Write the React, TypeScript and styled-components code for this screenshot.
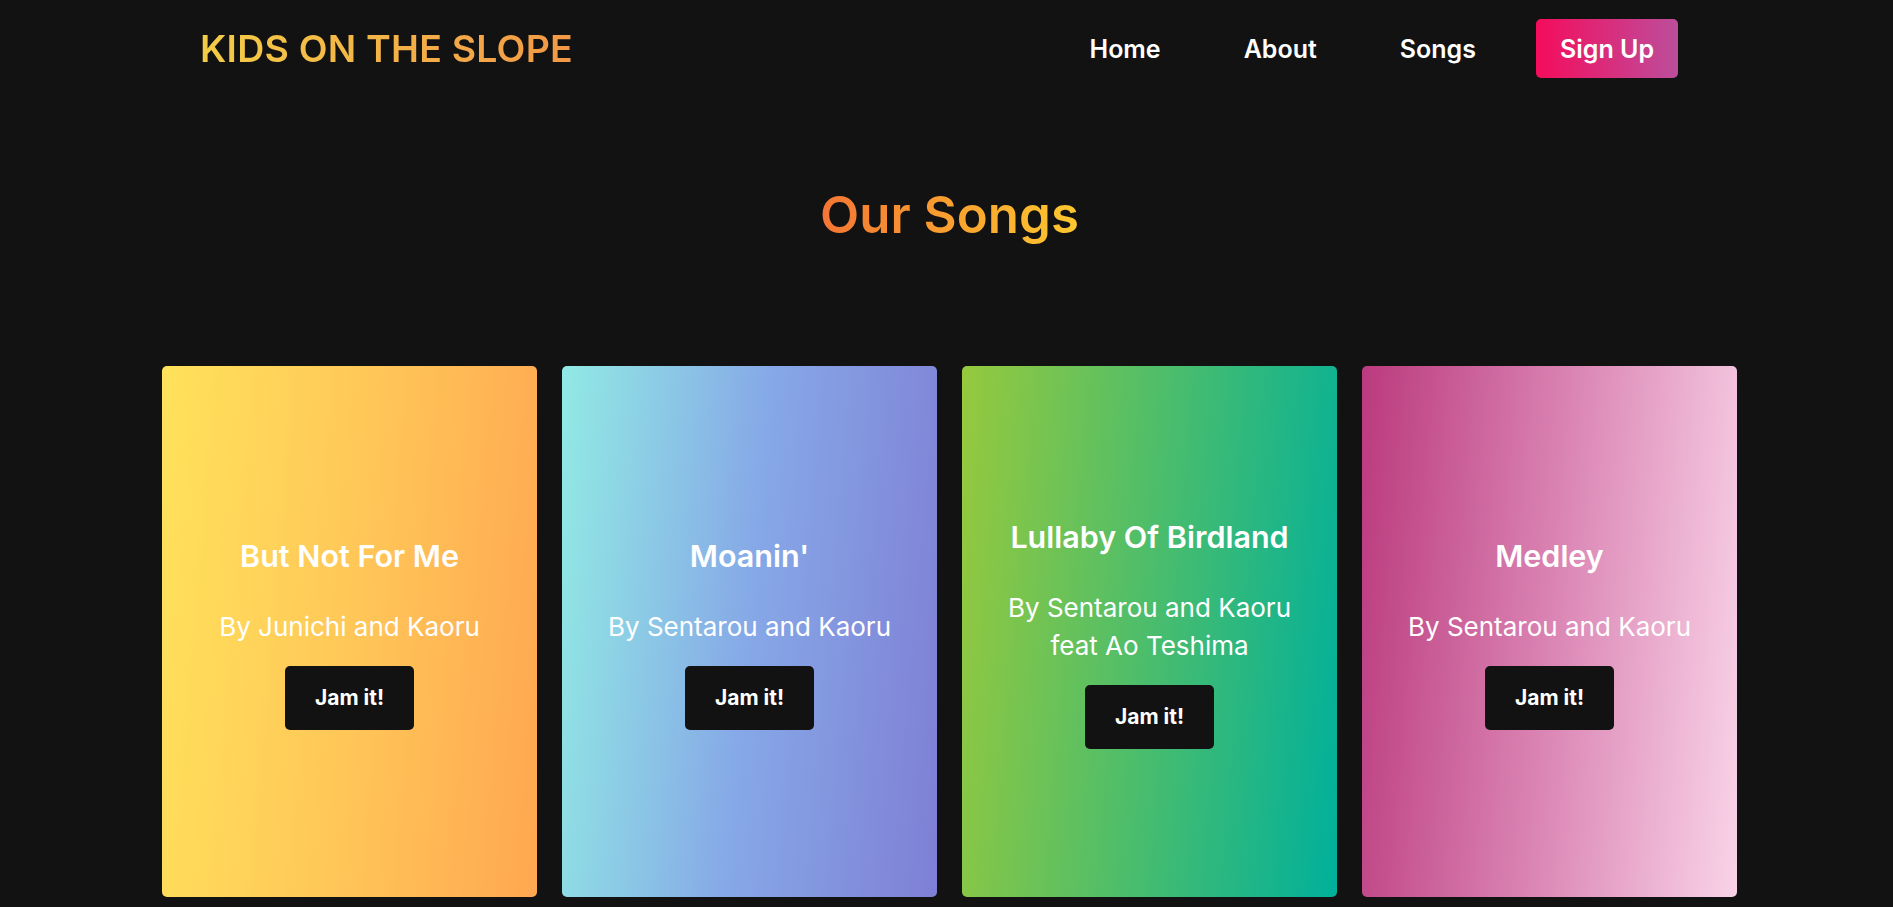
import React from "react";
import styled, { createGlobalStyle } from "styled-components";

const GlobalStyle = createGlobalStyle`
  * { box-sizing: border-box; }
  html, body {
    margin: 0;
    padding: 0;
    background: #121212;
    font-family: "Inter", "Noto Sans", sans-serif;
    color: #ffffff;
  }
`;

const Page = styled.div`
  min-height: 907px;
  background: #121212;
`;

const Header = styled.header`
  display: flex;
  align-items: center;
  justify-content: space-between;
  padding: 19px 215px 19px 200px;
`;

const Logo = styled.a`
  font-size: 37.5px;
  font-weight: 600;
  line-height: 59px;
  letter-spacing: 0.2px;
  background: linear-gradient(90deg, #f3cd47 0%, #f3ad47 60%, #f39847 100%);
  -webkit-background-clip: text;
  background-clip: text;
  color: transparent;
  text-decoration: none;
  white-space: nowrap;
`;

const Nav = styled.nav`
  display: flex;
  align-items: center;
  gap: 60px;
`;

const NavLinks = styled.ul`
  display: flex;
  align-items: center;
  gap: 83px;
  list-style: none;
  margin: 0;
  padding: 0;
`;

const NavLink = styled.a`
  font-size: 25px;
  font-weight: 600;
  color: #ffffff;
  text-decoration: none;
`;

const SignUp = styled.button`
  height: 59px;
  padding: 0 24px;
  border: none;
  border-radius: 5px;
  background: linear-gradient(90deg, #f50c5c 0%, #bc4e9c 100%);
  color: #ffffff;
  font-family: inherit;
  font-size: 25px;
  font-weight: 600;
  cursor: pointer;
`;

const Main = styled.main`
  padding: 0 0 0 6px;
  display: flex;
  flex-direction: column;
  align-items: center;
`;

const Heading = styled.h1`
  margin: 80px 0 114px;
  font-size: 51px;
  line-height: 75px;
  font-weight: 600;
  background: linear-gradient(90deg, #f47535 0%, #f9a42f 55%, #fdc830 100%);
  -webkit-background-clip: text;
  background-clip: text;
  color: transparent;
`;

const CardGrid = styled.section`
  display: grid;
  grid-template-columns: repeat(4, 375px);
  gap: 25px;
`;

const Card = styled.article<{ $from: string; $mid: string; $to: string }>`
  height: 531px;
  border-radius: 5px;
  background: linear-gradient(
    95deg,
    ${(p) => p.$from} 0%,
    ${(p) => p.$mid} 50%,
    ${(p) => p.$to} 100%
  );
  display: flex;
  flex-direction: column;
  align-items: center;
  justify-content: center;
  padding: 0 30px;
  text-align: center;
`;

const CardTitle = styled.h2`
  margin: 0;
  font-size: 30.5px;
  line-height: 45px;
  font-weight: 600;
  color: #ffffff;
`;

const CardArtist = styled.p`
  margin: 30px 0 21px;
  font-size: 26px;
  line-height: 37.8px;
  font-weight: 400;
  color: #ffffff;
`;

const JamButton = styled.button`
  padding: 17px 30px;
  border: none;
  border-radius: 5px;
  background: #121212;
  color: #ffffff;
  font-family: inherit;
  font-size: 21px;
  line-height: 30px;
  font-weight: 700;
  cursor: pointer;
`;

const songs = [
  {
    title: "But Not For Me",
    artist: "By Junichi and Kaoru",
    from: "#ffe25b",
    mid: "#ffc758",
    to: "#ffa751",
  },
  {
    title: "Moanin'",
    artist: "By Sentarou and Kaoru",
    from: "#91eae4",
    mid: "#86a8e7",
    to: "#7f7fd5",
  },
  {
    title: "Lullaby Of Birdland",
    artist: "By Sentarou and Kaoru feat Ao Teshima",
    from: "#96c93d",
    mid: "#4bbd6c",
    to: "#00b09b",
  },
  {
    title: "Medley",
    artist: "By Sentarou and Kaoru",
    from: "#bb3a7e",
    mid: "#da84b3",
    to: "#f9d3e8",
  },
];

export default function App() {
  return (
    <>
      <GlobalStyle />
      <Page>
        <Header>
          <Logo href="#">KIDS ON THE SLOPE</Logo>
          <Nav>
            <NavLinks>
              <li>
                <NavLink href="#">Home</NavLink>
              </li>
              <li>
                <NavLink href="#">About</NavLink>
              </li>
              <li>
                <NavLink href="#">Songs</NavLink>
              </li>
            </NavLinks>
            <SignUp>Sign Up</SignUp>
          </Nav>
        </Header>
        <Main>
          <Heading>Our Songs</Heading>
          <CardGrid>
            {songs.map((s) => (
              <Card key={s.title} $from={s.from} $mid={s.mid} $to={s.to}>
                <CardTitle>{s.title}</CardTitle>
                <CardArtist>{s.artist}</CardArtist>
                <JamButton>Jam it!</JamButton>
              </Card>
            ))}
          </CardGrid>
        </Main>
      </Page>
    </>
  );
}
